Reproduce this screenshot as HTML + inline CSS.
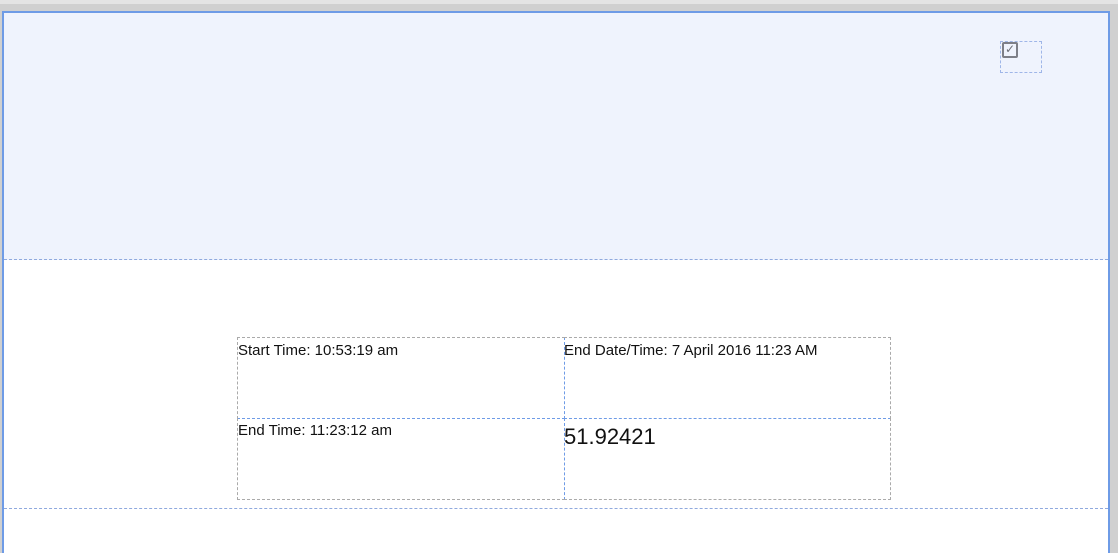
<!DOCTYPE html>
<html><head><style>
body{margin:0;width:1118px;height:542px;background:#d0d0d0;position:relative;overflow:hidden;font-family:"Liberation Sans","DejaVu Sans",sans-serif}
.page{position:absolute;left:2px;top:11px;width:1104px;height:540px;border:2px solid #6e9be6;border-bottom:none;background:#fff}
.hdr{position:absolute;left:0;top:0;width:1104px;height:246px;background:#eff3fd;border-bottom:1px dashed #8fa9de}
.band{position:absolute;left:0;top:495px;width:1104px;border-top:1px dashed #8fa9de}
.cb{position:absolute;left:996px;top:28px;width:40px;height:30px;border:1px dashed #9fb6e8}
.cb i{position:absolute;left:1px;top:0px;width:16px;height:16px;border:2px solid #7d7f88;border-radius:2px;box-sizing:border-box}
.cell{position:absolute;box-sizing:border-box;font-size:15px;color:#111;line-height:18px;padding-top:4px}
</style></head><body>
<div style="position:absolute;left:0;top:0;width:1118px;height:4px;background:#e4e4e4"></div>
<div class="page">
<div class="hdr"><div class="cb"><i></i><span style="position:absolute;left:4px;top:0px;font-size:12px;color:#6d6f78;font-weight:bold">✓</span></div></div>
<div class="cell" style="left:233px;top:324px;width:328px;height:82px;border:1px dashed #aaa;border-right:1px dashed #6e9be6;border-bottom:1px dashed #6e9be6">Start Time: 10:53:19 am</div>
<div class="cell" style="left:560px;top:324px;width:327px;height:82px;border:1px dashed #aaa;border-left:none;border-bottom:1px dashed #6e9be6">End Date/Time: 7 April 2016 11:23 AM</div>
<div class="cell" style="left:233px;top:405px;width:328px;height:82px;border:1px dashed #aaa;border-top:none;border-right:1px dashed #6e9be6">End Time: 11:23:12 am</div>
<div class="cell" style="left:560px;top:405px;width:327px;height:82px;border:1px dashed #aaa;border-top:none;border-left:none;font-size:22px;line-height:30px">51.92421</div>
<div class="band"></div>
</div>
</body></html>
